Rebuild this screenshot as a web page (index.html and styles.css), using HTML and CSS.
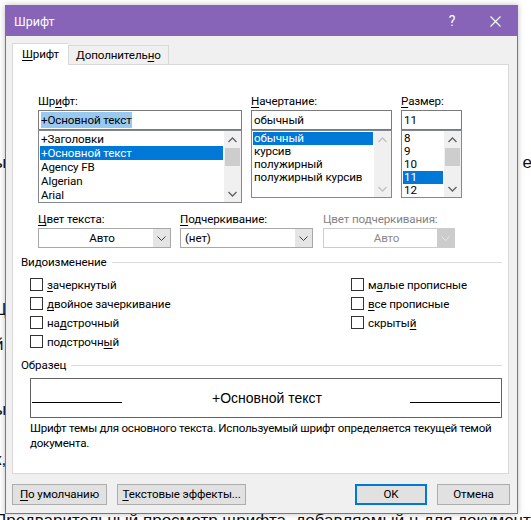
FILE: index.html
```html
<!DOCTYPE html>
<html lang="ru">
<head>
<meta charset="utf-8">
<title>Шрифт</title>
<link rel="stylesheet" href="styles.css">
</head>
<body>
<div class="doc">
  <div class="dl dl1"><span class="dl-left">ы</span><span class="dl-right">е</span></div>
  <div class="dl dl2"><span class="dl-left">Ц</span></div>
  <div class="dl dl3"><span class="dl-left">й</span></div>
  <div class="dl dl4"><span class="dl-left">ы</span></div>
  <div class="dl dl5"><span class="dl-left">к,</span></div>
  <div class="dl dl6"><span class="dl-left">Предварительный просмотр щрифта, добавляемый ц для документа, дщ</span><span class="dl-right">о</span></div>
</div>

<div class="dialog">
  <div class="titlebar">
    <span class="title">Шрифт</span>
    <span class="tb-help">?</span>
    <span class="tb-close"><svg width="11" height="11" viewBox="0 0 11 11"><path d="M0.5 0.5 L10.5 10.5 M10.5 0.5 L0.5 10.5" stroke="#fff" stroke-width="1.1" fill="none"/></svg></span>
  </div>
  <div class="dbody">
    <div class="tabs">
      <div class="tab active"><u>Ш</u>рифт</div>
      <div class="tab">Дополнитель<u>н</u>о</div>
    </div>
    <div class="panel">
      <div class="fontrow">
        <div class="fcol fcol-font">
          <div class="lbl">Шр<u>и</u>фт:</div>
          <div class="inp"><span class="sel-text">+Основной текст</span></div>
          <div class="list list-font">
            <div class="items">
              <div class="it">+Заголовки</div>
              <div class="it on">+Основной текст</div>
              <div class="it">Agency FB</div>
              <div class="it">Algerian</div>
              <div class="it">Arial</div>
            </div>
            <div class="sb">
              <div class="sb-btn"><svg width="9" height="6" viewBox="0 0 9 6"><path d="M0.5 5 L4.5 1 L8.5 5" stroke="#606060" stroke-width="1.3" fill="none"/></svg></div>
              <div class="sb-thumb"></div>
              <div class="sb-space"></div>
              <div class="sb-btn"><svg width="9" height="6" viewBox="0 0 9 6"><path d="M0.5 1 L4.5 5 L8.5 1" stroke="#606060" stroke-width="1.3" fill="none"/></svg></div>
            </div>
          </div>
        </div>
        <div class="fcol fcol-style">
          <div class="lbl"><u>Н</u>ачертание:</div>
          <div class="inp">обычный</div>
          <div class="list list-sm">
            <div class="items">
              <div class="it on">обычный</div>
              <div class="it">курсив</div>
              <div class="it">полужирный</div>
              <div class="it">полужирный курсив</div>
            </div>
            <div class="sb">
              <div class="sb-btn"><svg width="9" height="6" viewBox="0 0 9 6"><path d="M0.5 5 L4.5 1 L8.5 5" stroke="#c2c2c2" stroke-width="1.3" fill="none"/></svg></div>
              <div class="sb-space"></div>
              <div class="sb-btn"><svg width="9" height="6" viewBox="0 0 9 6"><path d="M0.5 1 L4.5 5 L8.5 1" stroke="#c2c2c2" stroke-width="1.3" fill="none"/></svg></div>
            </div>
          </div>
        </div>
        <div class="fcol fcol-size">
          <div class="lbl"><u>Р</u>азмер:</div>
          <div class="inp">11</div>
          <div class="list list-sm">
            <div class="items">
              <div class="it">8</div>
              <div class="it">9</div>
              <div class="it">10</div>
              <div class="it on">11</div>
              <div class="it">12</div>
            </div>
            <div class="sb">
              <div class="sb-btn"><svg width="9" height="6" viewBox="0 0 9 6"><path d="M0.5 5 L4.5 1 L8.5 5" stroke="#606060" stroke-width="1.3" fill="none"/></svg></div>
              <div class="sb-thumb"></div>
              <div class="sb-space"></div>
              <div class="sb-btn"><svg width="9" height="6" viewBox="0 0 9 6"><path d="M0.5 1 L4.5 5 L8.5 1" stroke="#606060" stroke-width="1.3" fill="none"/></svg></div>
            </div>
          </div>
        </div>
      </div>

      <div class="comborow">
        <div class="ccol ccol1">
          <div class="lbl"><u>Ц</u>вет текста:</div>
          <div class="combo"><span class="cval center">Авто</span><span class="cbtn"><svg width="9" height="5" viewBox="0 0 9 5"><path d="M0.5 0.5 L4.5 4.5 L8.5 0.5" stroke="#404040" stroke-width="1" fill="none"/></svg></span></div>
        </div>
        <div class="ccol ccol2">
          <div class="lbl"><u>П</u>одчеркивание:</div>
          <div class="combo"><span class="cval">(нет)</span><span class="cbtn"><svg width="9" height="5" viewBox="0 0 9 5"><path d="M0.5 0.5 L4.5 4.5 L8.5 0.5" stroke="#404040" stroke-width="1" fill="none"/></svg></span></div>
        </div>
        <div class="ccol ccol3">
          <div class="lbl dis">Цвет подчеркивания:</div>
          <div class="combo disabled"><span class="cval center">Авто</span><span class="cbtn"><svg width="9" height="5" viewBox="0 0 9 5"><path d="M0.5 0.5 L4.5 4.5 L8.5 0.5" stroke="#e6e6e6" stroke-width="1" fill="none"/></svg></span></div>
        </div>
      </div>

      <div class="group g-effects">
        <div class="ghead"><span>Видоизменение</span><span class="gline"></span></div>
        <div class="checks">
          <div class="chk"><span class="box"></span><span><u>з</u>ачеркнутый</span></div>
          <div class="chk"><span class="box"></span><span>м<u>а</u>лые прописные</span></div>
          <div class="chk"><span class="box"></span><span><u>д</u>войное зачеркивание</span></div>
          <div class="chk"><span class="box"></span><span><u>в</u>се прописные</span></div>
          <div class="chk"><span class="box"></span><span>на<u>д</u>строчный</span></div>
          <div class="chk"><span class="box"></span><span>скрыты<u>й</u></span></div>
          <div class="chk"><span class="box"></span><span>подстрочн<u>ы</u>й</span></div>
        </div>
      </div>

      <div class="group g-sample">
        <div class="ghead"><span>Образец</span><span class="gline"></span></div>
        <div class="preview">
          <span class="pv-line pv-left"></span>
          <span class="pv-text">+Основной текст</span>
          <span class="pv-line pv-right"></span>
        </div>
        <div class="desc">Шрифт темы для основного текста. Используемый шрифт определяется текущей темой документа.</div>
      </div>
    </div>

    <div class="buttons">
      <div class="btn b-default"><u>П</u>о умолчанию</div>
      <div class="btn b-effects"><u>Т</u>екстовые эффекты...</div>
      <div class="spacer"></div>
      <div class="btn b-ok">OK</div>
      <div class="btn b-cancel">Отмена</div>
    </div>
  </div>
</div>
</body>
</html>
```
FILE: styles.css
```css
* { box-sizing: border-box; }
html, body { margin: 0; padding: 0; }
body {
  width: 531px;
  height: 520px;
  overflow: hidden;
  position: relative;
  background: #ffffff;
  font-family: Roboto, "Liberation Sans", sans-serif;
  font-size: 11.6px;
  letter-spacing: -0.12px;
  color: #000;
}
u { text-decoration: underline; text-underline-offset: 2px; text-decoration-thickness: 1px; }

/* background document */
.doc {
  padding-top: 153px;
  font-family: "Liberation Sans", Arial, sans-serif;
  font-size: 17px;
  letter-spacing: 0;
  line-height: 20px;
  color: #111;
  width: 531px;
  overflow: hidden;
}
.dl { display: flex; justify-content: space-between; height: 20px; white-space: nowrap; overflow: hidden; }
.dl-left { margin-left: -6px; }
.dl-right { margin-right: -1px; }
.dl2 { margin-top: 127px; }
.dl3 { margin-top: 15px; }
.dl4 { margin-top: 45px; }
.dl5 { margin-top: 30px; }
.dl6 { margin-top: 41px; }

/* dialog */
.dialog {
  position: absolute;
  left: 5px;
  top: 5px;
  width: 513px;
  height: 509px;
  background: #f0f0f0;
  border: 1px solid #8764b8;
  box-shadow: 0 0 6px rgba(0,0,0,0.25);
  display: flex;
  flex-direction: column;
}
.titlebar {
  height: 30px;
  background: #8764b8;
  color: #fff;
  display: flex;
  align-items: center;
  padding-left: 8px;
  flex-shrink: 0;
}
.title { font-size: 12.5px; letter-spacing: 0; flex: 1; padding-top: 1px; }
.tb-help { font-size: 14px; width: 14px; margin-right: 31px; text-align: center; }
.tb-close { display: flex; margin-right: 16px; padding-top: 1px; }

.dbody {
  flex: 1;
  display: flex;
  flex-direction: column;
  padding: 7px 8px 7px 6px;
}
.tabs { display: flex; align-items: flex-end; height: 21px; position: relative; z-index: 1; }
.tab {
  height: 19px;
  border: 1px solid #d9d9d9;
  border-bottom: none;
  background: #f0f0f0;
  padding: 0 7px 0 7px;
  line-height: 19px;
}
.tab.active {
  height: 22px;
  margin-bottom: -1px;
  background: #fff;
  padding: 0 9px 0 9px;
  line-height: 21px;
  border-right: none;
}

.panel {
  height: 410px;
  background: #fff;
  border: 1px solid #d9d9d9;
  padding: 28px 0 0 0;
}

.lbl { height: 17px; line-height: 16px; white-space: nowrap; }
.lbl.dis { color: #838383; }

.fontrow { display: flex; gap: 9px; align-items: flex-start; padding-left: 25px; }
.fcol-font { width: 204px; }
.fcol-style { width: 141px; }
.fcol-size { width: 61px; }

.inp {
  height: 20px;
  border: 1px solid #7a7a7a;
  padding: 0 2px;
  line-height: 18px;
  white-space: nowrap;
  overflow: hidden;
}
.sel-text { background: #99c9ef; padding: 1px 0 1px 0; }

.list {
  display: flex;
  border: 1px solid #828790;
  height: 68px;
  overflow: hidden;
}
.list-font { height: 73px; }
.items { flex: 1; padding: 1px; min-width: 0; }
.it { height: 13px; line-height: 13px; padding-left: 1px; white-space: nowrap; overflow: hidden; }
.list-font .it { height: 14px; line-height: 14px; }
.it.on { background: #0078d7; color: #fff; }

.sb { width: 17px; background: #f0f0f0; display: flex; flex-direction: column; flex-shrink: 0; }
.sb-btn { height: 17px; display: flex; align-items: center; justify-content: center; flex-shrink: 0; }
.sb-thumb { height: 18px; margin: 0 1px; background: #cdcdcd; flex-shrink: 0; }
.sb-space { flex: 1; }

.comborow { display: flex; padding-left: 25px; margin-top: 8px; }
.ccol1 { width: 133px; }
.ccol2 { width: 133px; margin-left: 9px; }
.ccol3 { width: 132px; margin-left: 10px; }
.combo {
  height: 20px;
  border: 1px solid #a8a8a8;
  display: flex;
  background: #fff;
}
.cval { flex: 1; padding-left: 4px; line-height: 18px; }
.cval.center { text-align: center; padding-left: 12px; }
.cbtn { width: 17px; background: #e5e5e5; display: flex; align-items: center; justify-content: center; }
.combo.disabled { border-color: #cccccc; color: #8a8a8a; }
.combo.disabled .cbtn { background: #cccccc; }

.group { padding: 0 6px 0 8px; }
.ghead { display: flex; align-items: center; height: 16px; line-height: 16px; }
.gline { flex: 1; height: 1px; background: #dcdcdc; margin-left: 5px; }
.g-effects { margin-top: 6px; }
.checks {
  display: grid;
  grid-template-columns: 321px 1fr;
  padding-left: 9px;
  padding-top: 5px;
}
.chk { display: flex; align-items: center; height: 19px; white-space: nowrap; }
.box { width: 13px; height: 13px; border: 1px solid #333; background: #fff; margin-right: 4px; flex-shrink: 0; }

.g-sample { margin-top: 6px; }
.preview {
  margin: 5px 0 0 9px;
  height: 40px;
  border: 1px solid #646464;
  display: flex;
  align-items: center;
  justify-content: space-between;
  padding: 0 1px;
}
.pv-line { width: 90px; height: 1px; background: #000; margin-top: 9px; }
.pv-text { font-family: "Liberation Sans", Arial, sans-serif; font-size: 14px; letter-spacing: 0; padding-left: 2px; }
.desc { margin: 3px -6px 0 9px; line-height: 15px; letter-spacing: -0.25px; }

.buttons { display: flex; margin-top: 10px; gap: 10px; }
.spacer { flex: 1; }
.btn {
  height: 21px;
  background: #e1e1e1;
  border: 1px solid #adadad;
  line-height: 19px;
  text-align: center;
  white-space: nowrap;
}
.b-default { width: 95px; }
.b-effects { width: 129px; }
.b-ok { width: 72px; border: 2px solid #0078d7; line-height: 17px; }
.b-cancel { width: 73px; margin-right: -1px; }
```
